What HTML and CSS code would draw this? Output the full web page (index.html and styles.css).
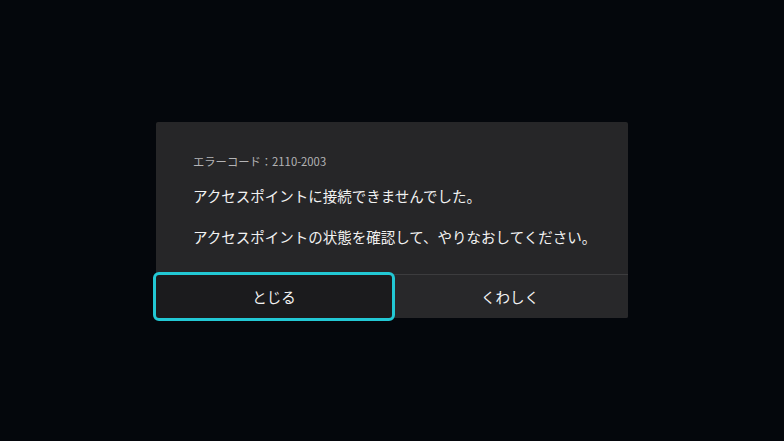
FILE: index.html
```html
<!DOCTYPE html>
<html lang="ja">
<head>
<meta charset="utf-8">
<link rel="stylesheet" href="styles.css">
</head>
<body>
<div class="screen">
  <div class="dialog">
    <div class="content">
      <p class="code">エラーコード：2110-2003</p>
      <p class="msg msg1">アクセスポイントに接続できませんでした。</p>
      <p class="msg msg2">アクセスポイントの状態を確認して、やりなおしてください。</p>
    </div>
    <div class="actions">
      <button class="btn focused">とじる</button>
      <button class="btn">くわしく</button>
    </div>
  </div>
</div>
</body>
</html>
```

FILE: styles.css
```css
html, body {
  margin: 0;
  padding: 0;
  background: #04070c;
}
.screen {
  width: 784px;
  height: 441px;
  display: flex;
  justify-content: center;
  padding-top: 122px;
  box-sizing: border-box;
  font-family: "Noto Sans CJK JP", "Noto Sans", sans-serif;
}
.dialog {
  width: 472px;
  height: 196px;
  background: #262628;
  border-radius: 2px;
  display: flex;
  flex-direction: column;
}
.content {
  flex: 1;
  padding: 31px 0 0 37px;
}
.code {
  margin: 0;
  font-size: 11.3px;
  line-height: 16px;
  color: #b4b4b6;
}
.msg {
  margin: 0;
  font-size: 14.5px;
  line-height: 20px;
  color: #f2f2f2;
}
.msg1 { margin-top: 17px; }
.msg2 { margin-top: 21px; }
.actions {
  height: 43px;
  display: flex;
  border-top: 1px solid #3c3c3e;
}
.btn {
  flex: 1;
  border: none;
  background: #28282a;
  color: #f2f2f2;
  font-family: inherit;
  font-size: 14.5px;
  padding: 0;
  border-radius: 0 0 2px 0;
}
.btn.focused {
  background: #1b1b1d;
  outline: 3px solid #22c8d4;
  border-radius: 3px;
  position: relative;
  z-index: 1;
}
```
